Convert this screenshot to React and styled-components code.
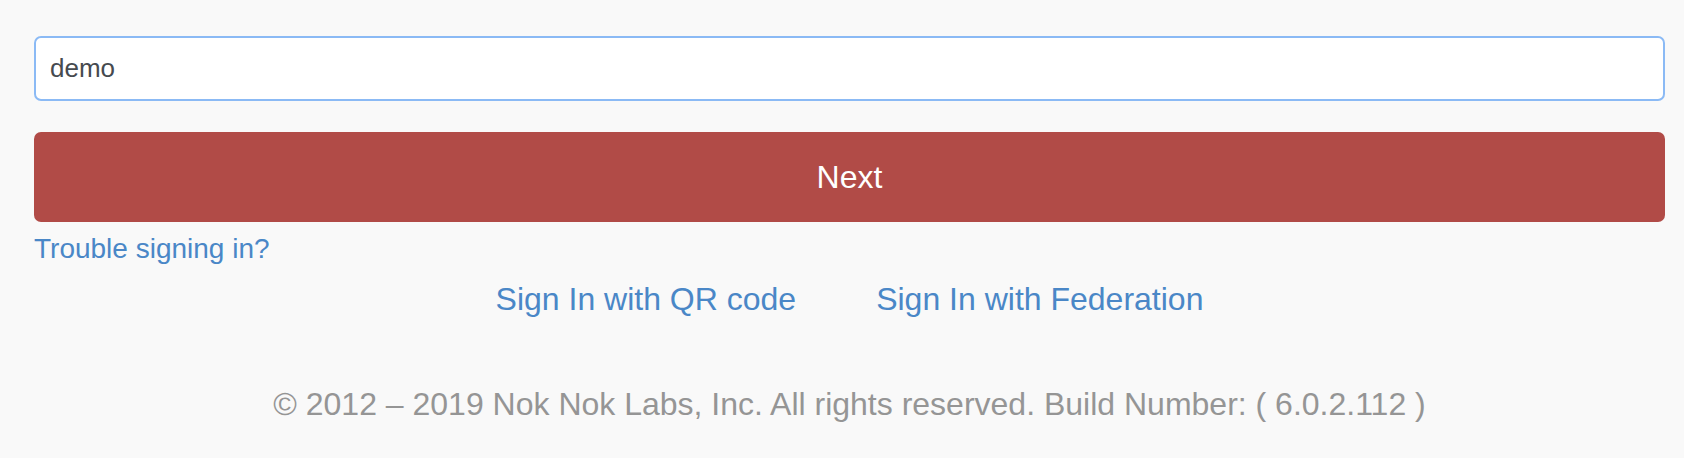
import React from "react";
import styled, { createGlobalStyle } from "styled-components";

const GlobalStyle = createGlobalStyle`
  html, body {
    margin: 0;
    padding: 0;
    background: #f9f9f9;
    font-family: "Liberation Sans", Arial, Helvetica, sans-serif;
  }
`;

const Page = styled.div`
  box-sizing: border-box;
  width: 1684px;
  height: 458px;
  padding: 36px 19px 0 34px;
  display: flex;
  flex-direction: column;
  background: #f9f9f9;
`;

const TextInput = styled.input`
  box-sizing: border-box;
  width: 100%;
  height: 65px;
  margin: 0;
  padding: 0 14px;
  border: 2px solid #8bbaf5;
  border-radius: 7px;
  background: #ffffff;
  color: #464a4f;
  font-family: "Liberation Sans", Arial, sans-serif;
  font-size: 26px;
  outline: none;
`;

const PrimaryButton = styled.button`
  box-sizing: border-box;
  width: 100%;
  height: 90px;
  margin-top: 31px;
  border: none;
  border-radius: 7px;
  background: #b14b47;
  color: #ffffff;
  font-family: "Liberation Sans", Arial, sans-serif;
  font-size: 32px;
  cursor: pointer;
`;

const Link = styled.a`
  color: #4a87c7;
  text-decoration: none;
  font-size: ${(p) => p.$size}px;
  line-height: ${(p) => p.$line}px;
  cursor: pointer;
`;

const TroubleRow = styled.div`
  margin-top: 11px;
  display: flex;
`;

const AltRow = styled.div`
  margin-top: 16px;
  display: flex;
  justify-content: center;
  gap: 80px;
`;

const Footer = styled.footer`
  margin-top: 69px;
  text-align: center;
  color: #959595;
  font-size: 32px;
  line-height: 36px;
`;

export default function App() {
  return (
    <>
      <GlobalStyle />
      <Page>
        <TextInput type="text" defaultValue="demo" />
        <PrimaryButton type="button">Next</PrimaryButton>
        <TroubleRow>
          <Link $size={28} $line={32}>Trouble signing in?</Link>
        </TroubleRow>
        <AltRow>
          <Link $size={32} $line={36}>Sign In with QR code</Link>
          <Link $size={32} $line={36}>Sign In with Federation</Link>
        </AltRow>
        <Footer>
          © 2012 – 2019 Nok Nok Labs, Inc. All rights reserved. Build Number: ( 6.0.2.112 )
        </Footer>
      </Page>
    </>
  );
}
